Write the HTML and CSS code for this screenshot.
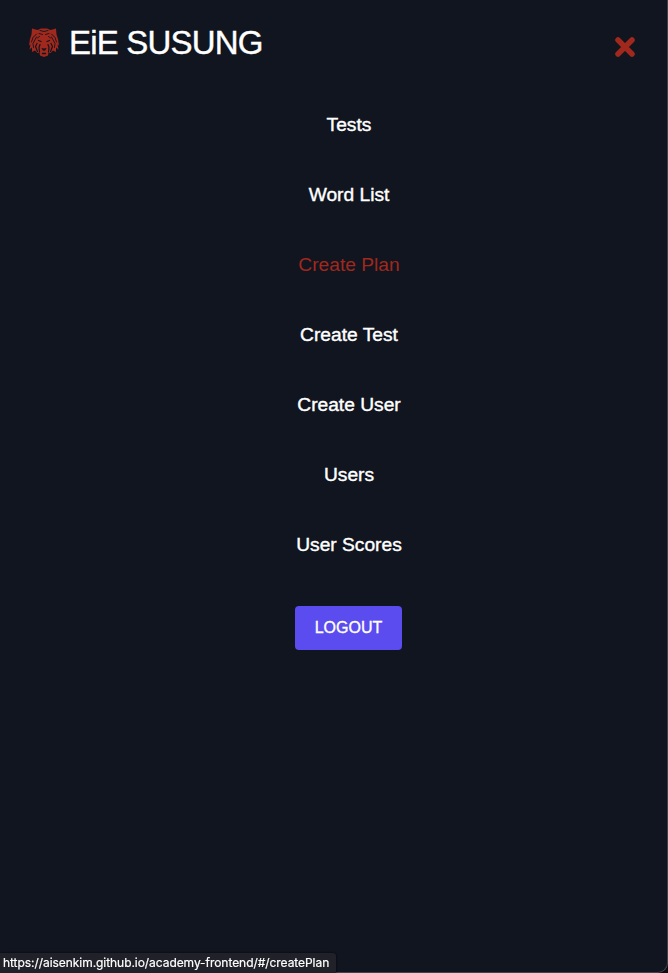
FILE: index.html
```html
<!DOCTYPE html>
<html lang="en">
<head>
<meta charset="utf-8">
<title>EiE SUSUNG</title>
<link rel="stylesheet" href="styles.css">
</head>
<body>
<div class="page">
  <header class="header">
    <a class="brand">
      <svg class="tiger" viewBox="0 0 60 58" aria-hidden="true">
        <path fill="#a0281c" d="M6 1 17 4 24 1H36L43 4 54 1 55 13 58 22 60 35 57 33 59 43 54 39 54 48 48 45 43 50 39 49 38 55 30 58 22 55 21 49 17 50 12 45 6 48 6 39 1 43 3 33 0 35 2 22 5 13Z"/>
        <g fill="none" stroke="#111520" stroke-width="1.8" stroke-linecap="round" stroke-linejoin="round">
          <path d="M22 5 30 7 38 5M20 11 27 13M40 11 33 13M15 12 8 19 5 28M45 12 52 19 55 28M15 18 8 31 9 39M45 18 52 31 51 39M21 17 17 20M39 17 43 20"/>
          <path stroke-width="2.4" d="M16 31 13 37 17 47M44 31 47 37 43 47M22 33 20 39 21 48M38 33 40 39 39 48"/>
          <path stroke-width="2.6" d="M19 25 24 27M41 25 36 27M27 51H33"/>
        </g>
        <path fill="#111520" d="M25 40 30 41 35 40 33 44 30 46 27 44Z"/>
      </svg>
      <span class="title">EiE SUSUNG</span>
    </a>
    <svg class="close" viewBox="0 0 22 22" aria-hidden="true"><path d="M4 4 18 18M18 4 4 18"/></svg>
  </header>
  <nav class="menu">
    <a>Tests</a>
    <a>Word List</a>
    <a class="active">Create Plan</a>
    <a>Create Test</a>
    <a>Create User</a>
    <a>Users</a>
    <a>User Scores</a>
    <button class="logout">LOGOUT</button>
  </nav>
</div>
<div class="status">https://aisenkim.github.io/academy-frontend/#/createPlan</div>
</body>
</html>
```
FILE: styles.css
```css
* { box-sizing: border-box; }
body {
  margin: 0;
  background: #0b0c10;
  font-family: "Liberation Sans", Arial, sans-serif;
  color: #fff;
}
.page {
  height: 973px;
  background: #111520;
  border-right: 1px solid #41434b;
  border-bottom: 1px solid #41434b;
  border-bottom-right-radius: 10px;
}
.header {
  height: 90px;
  display: flex;
  justify-content: space-between;
  padding: 0 31px 0 29px;
}
.brand { display: flex; align-items: flex-start; }
.tiger { width: 30px; height: 29px; margin: 28px 10px 0 0; }
.title {
  margin-top: 24px;
  font-size: 33px;
  line-height: 38px;
  letter-spacing: -.8px;
  white-space: nowrap;
  -webkit-text-stroke: .4px;
}
.close { width: 22px; height: 22px; margin-top: 36px; }
.close path { fill: none; stroke: #a0281c; stroke-width: 5.5; stroke-linecap: round; }
.menu {
  display: flex;
  flex-direction: column;
  align-items: center;
  padding-left: 31px;
  font-size: 19.2px;
}
.menu a { height: 70px; line-height: 70px; -webkit-text-stroke: .4px; }
.menu .active { color: #a0281c; -webkit-text-stroke: 0; }
.logout {
  width: 107px;
  height: 44px;
  margin: 26px 2px 0 0;
  padding: 0 0 0 1px;
  border: 0;
  border-radius: 4px;
  background: #5b4cf0;
  color: #fff;
  font: 16px/44px "Liberation Sans", Arial, sans-serif;
  -webkit-text-stroke: .35px;
}
.status {
  position: fixed;
  left: 0;
  bottom: 0;
  width: 336px;
  height: 20px;
  padding-left: 3px;
  background: #202129;
  border-top-right-radius: 3px;
  box-shadow: 0 0 2px #000;
  font: 12px/20px Inter, sans-serif;
  letter-spacing: -.055px;
  white-space: nowrap;
  -webkit-text-stroke: .2px;
}
```
